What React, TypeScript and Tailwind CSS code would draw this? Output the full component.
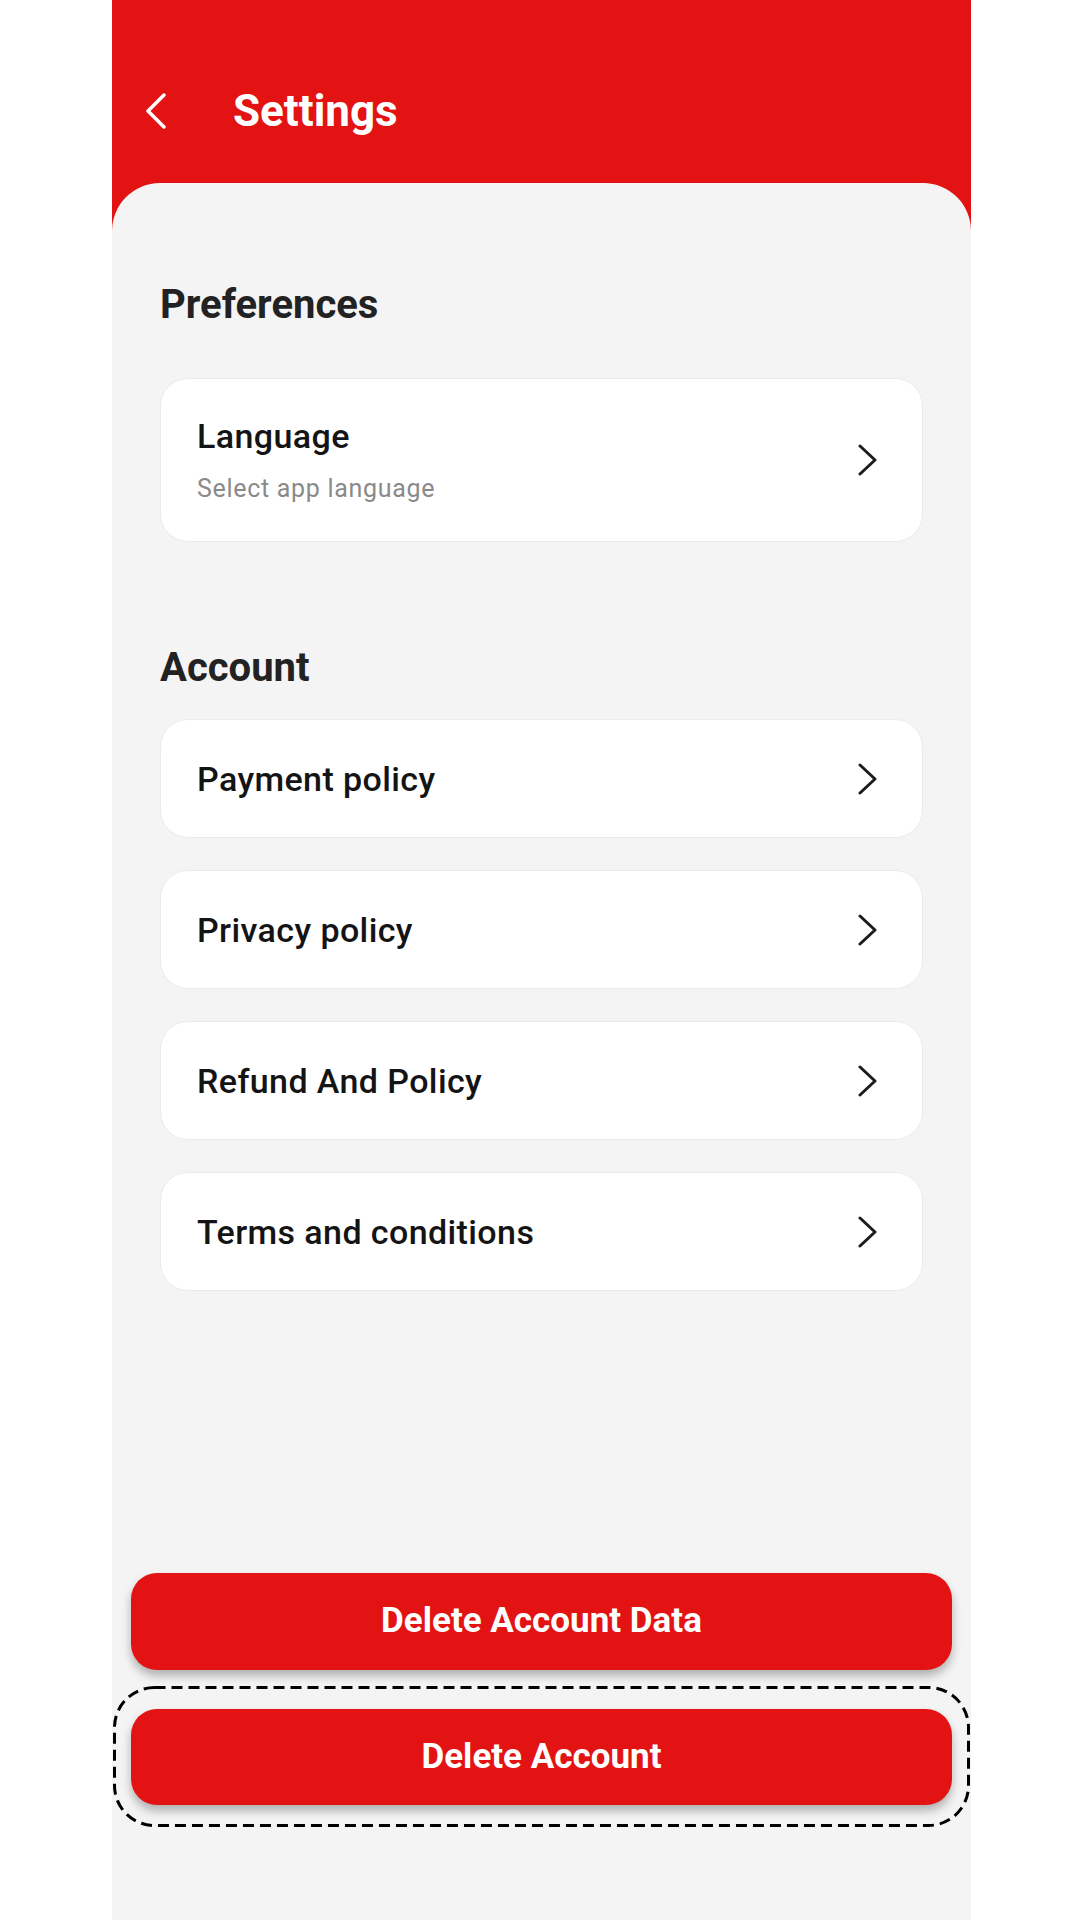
import React from "react";

const Chevron = () => (
	<svg width="20" height="32" viewBox="0 0 20 32" fill="none" className="shrink-0">
		<polyline points="2,2 17,16 2,30" stroke="#1c1c1c" strokeWidth="3" strokeLinecap="round" strokeLinejoin="round" />
	</svg>
);

const Row = ({ title }: { title: string }) => (
	<div className="flex h-[119px] items-center justify-between rounded-[28px] border border-[#ebebeb] bg-white pl-9 pr-[44px]">
		<span className="text-[34px] font-medium leading-none tracking-[0.4px] text-[#141414]">{title}</span>
		<Chevron />
	</div>
);

const App = () => {
	return (
		<div className="min-h-[1920px] w-full bg-white font-['Roboto',sans-serif]">
			<div className="ml-[112px] flex min-h-[1920px] w-[859px] flex-col bg-[#e41313]">
				<header className="h-[183px] pt-[88px]">
					<div className="flex h-[46px] items-center">
						<svg width="24" height="36" viewBox="0 0 24 36" fill="none" className="ml-[32px] mr-[65px]">
							<polyline points="20,2 4,18 20,34" stroke="white" strokeWidth="3.5" strokeLinecap="round" strokeLinejoin="round" />
						</svg>
						<h1 className="text-[44px] font-bold leading-none text-white">Settings</h1>
					</div>
				</header>

				<main className="flex flex-1 flex-col rounded-t-[48px] bg-[#f4f4f4]">
					<section className="px-12 pt-[102px]">
						<h2 className="text-[40px] font-bold leading-none text-[#222]">Preferences</h2>
						<div className="mt-[53px] flex h-[164px] items-center justify-between rounded-[28px] border border-[#ebebeb] bg-white pl-9 pr-[44px]">
							<div className="flex flex-col gap-[23px]">
								<span className="text-[34px] font-medium leading-none tracking-[0.4px] text-[#141414]">Language</span>
								<span className="text-[25px] leading-none tracking-[0.7px] text-[#8a8a8a]">Select app language</span>
							</div>
							<Chevron />
						</div>
					</section>

					<section className="px-12 pt-[106px]">
						<h2 className="text-[40px] font-bold leading-none text-[#222]">Account</h2>
						<div className="mt-[31px] flex flex-col gap-8">
							<Row title="Payment policy" />
							<Row title="Privacy policy" />
							<Row title="Refund And Policy" />
							<Row title="Terms and conditions" />
						</div>
					</section>

					<div className="mt-[282px] flex flex-col">
						<button className="mx-[19px] h-[97px] rounded-[26px] bg-[#e41313] text-[35px] font-bold text-white shadow-[0_6px_10px_rgba(0,0,0,0.28)]">
							Delete Account Data
						</button>
						<div className="relative mx-[1px] mt-4 px-[18px] pt-[23px] pb-[22px]">
							<svg className="pointer-events-none absolute inset-0 h-full w-full" fill="none">
								<rect x="1.5" y="1.5" width="calc(100% - 3px)" height="calc(100% - 3px)" rx="40" stroke="black" strokeWidth="3" strokeDasharray="11 6" />
							</svg>
							<button className="h-[96px] w-full rounded-[26px] bg-[#e41313] text-[35px] font-bold text-white shadow-[0_6px_10px_rgba(0,0,0,0.28)]">
								Delete Account
							</button>
						</div>
					</div>
				</main>
			</div>
		</div>
	);
};

export default App;
